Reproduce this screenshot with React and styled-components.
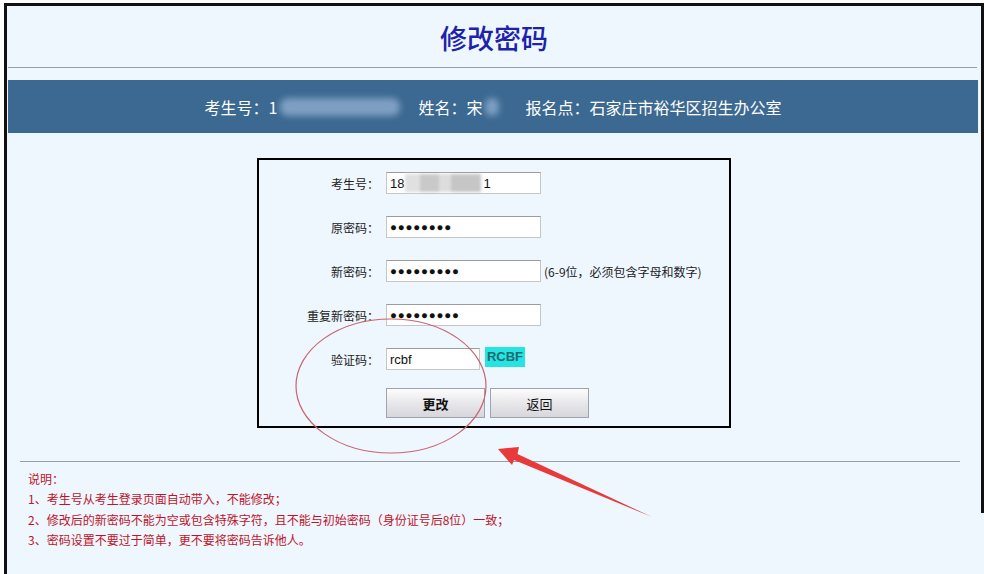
import styled, { createGlobalStyle } from "styled-components"

const GlobalStyle = createGlobalStyle`
    html, body {
        margin: 0;
        background: #ffffff;
        font-family: "Noto Sans CJK SC", "Liberation Sans", sans-serif;
    }
`

const rows = [
    { label: "原密码：", value: "●●●●●●●●" },
    { label: "新密码：", value: "●●●●●●●●●", hint: "(6-9位，必须包含字母和数字)" },
    { label: "重复新密码：", value: "●●●●●●●●●" },
]

const notes = [
    "1、考生号从考生登录页面自动带入，不能修改；",
    "2、修改后的新密码不能为空或包含特殊字符，且不能与初始密码（身份证号后8位）一致；",
    "3、密码设置不要过于简单，更不要将密码告诉他人。",
]

const App = () => {
    return <>
        <GlobalStyle />
        <Frame>
            <Title>修改密码</Title>
            <Rule />
            <InfoBar>
                <span>考生号：1</span>
                <Smudge $w={120} />
                <InfoItem $gap={18}>姓名：宋</InfoItem>
                <Smudge $w={14} />
                <InfoItem $gap={26}>报名点：石家庄市裕华区招生办公室</InfoItem>
            </InfoBar>

            <FormBox>
                <Row>
                    <Label>考生号：</Label>
                    <Field $w={155}>
                        18<GreySmudge />1
                    </Field>
                </Row>
                {rows.map((r) => (
                    <Row key={r.label}>
                        <Label>{r.label}</Label>
                        <Field $w={155} $dots>{r.value}</Field>
                        {r.hint && <Hint>{r.hint}</Hint>}
                    </Row>
                ))}
                <Row>
                    <Label>验证码：</Label>
                    <Field $w={94}>rcbf</Field>
                    <Captcha>RCBF</Captcha>
                </Row>
                <ButtonRow>
                    <Button $bold>更改</Button>
                    <Button>返回</Button>
                </ButtonRow>
            </FormBox>

            <NoteRule />
            <Notes>
                <p>说明：</p>
                {notes.map((n) => <p key={n}>{n}</p>)}
            </Notes>

            <Marks viewBox="0 0 974 568">
                <ellipse cx="384" cy="380" rx="95" ry="67" fill="none" stroke="#c9646e" strokeWidth="1.2" />
                <polygon
                    points="491,443 512,441 510.5,448 645,511 507,454 505,459"
                    fill="#e83a3a"
                />
            </Marks>
        </Frame>
    </>
}

const Frame = styled.div`
    position: relative;
    box-sizing: border-box;
    margin: 3px 0 0 4px;
    width: 980px;
    height: 571px;
    padding-right: 3px;
    border: 3px solid #111;
    border-bottom: none;
    border-right: none;
    background: #eef6fe;
    overflow: hidden;

    &::after {
        content: "";
        position: absolute;
        top: 0;
        right: 0;
        width: 3px;
        height: 507px;
        background: #111;
    }
`

const Title = styled.h1`
    margin: 0;
    padding-top: 12px;
    height: 40px;
    line-height: 40px;
    text-align: center;
    font-size: 27px;
    font-weight: 500;
    color: #1d22ad;
`

const Rule = styled.div`
    height: 1px;
    margin: 9px 4px 0 1px;
    background: #9a9ca6;
`

const InfoBar = styled.div`
    display: flex;
    align-items: center;
    justify-content: center;
    height: 53px;
    margin: 12px 3px 0 1px;
    background: #3c6991;
    color: #ffffff;
    font-size: 16px;
`

const InfoItem = styled.span`
    margin-left: ${(p) => p.$gap}px;
`

const Smudge = styled.span`
    display: inline-block;
    width: ${(p) => p.$w}px;
    height: 18px;
    margin-left: 3px;
    border-radius: 8px;
    background: #7d9fc2;
    filter: blur(3px);
`

const FormBox = styled.div`
    box-sizing: border-box;
    width: 474px;
    height: 270px;
    margin: 25px auto 0;
    padding-top: 12px;
    border: 2px solid #000;
    display: flex;
    flex-direction: column;
    gap: 22px;
`

const Row = styled.div`
    display: flex;
    align-items: center;
    height: 22px;
`

const Label = styled.label`
    width: 120px;
    margin-right: 7px;
    text-align: right;
    font-size: 12px;
    color: #222;
    white-space: nowrap;
`

const Field = styled.div`
    box-sizing: border-box;
    display: flex;
    align-items: center;
    width: ${(p) => p.$w}px;
    height: 22px;
    padding: 0 3px;
    background: #fff;
    border: 1px solid #c6c6c6;
    border-top-color: #9c9c9c;
    font-family: "Liberation Sans", Arial, sans-serif;
    font-size: ${(p) => (p.$dots ? "11.5px" : "13px")};
    letter-spacing: ${(p) => (p.$dots ? "0.8px" : "0")};
    color: #111;
`

const GreySmudge = styled.span`
    display: inline-block;
    width: 76px;
    height: 18px;
    margin: 0 2px 0 1px;
    background: linear-gradient(90deg, #e0e0e0 0 20%, #c9c9c9 20% 45%, #dddddd 45% 60%, #c6c6c6 60% 100%);
    filter: blur(1.5px);
`

const Hint = styled.span`
    margin-left: 3px;
    font-size: 12px;
    color: #222;
`

const Captcha = styled.span`
    align-self: flex-start;
    margin: -1px 0 0 5px;
    width: 40px;
    height: 20px;
    line-height: 19px;
    text-align: center;
    background: #27e4e4;
    color: #1f6b6e;
    font-family: "Liberation Sans", Arial, sans-serif;
    font-weight: bold;
    font-size: 13px;
`

const ButtonRow = styled.div`
    display: flex;
    gap: 5px;
    margin: -4px 0 0 127px;
`

const Button = styled.button`
    width: 99px;
    height: 30px;
    padding: 0;
    background: linear-gradient(#fdfdfd, #e6e6ea 55%, #d6d6dc);
    border: 1px solid #9ea3ad;
    font-family: "Noto Sans CJK SC", sans-serif;
    font-size: 13px;
    font-weight: ${(p) => (p.$bold ? "bold" : "normal")};
    color: #111;
`

const NoteRule = styled.div`
    width: 940px;
    height: 1px;
    margin: 33px 0 0 13px;
    background: #9a9ca6;
`

const Notes = styled.div`
    margin: 7px 0 0 21px;
    font-size: 12px;
    color: #bf1428;
    p {
        margin: 0;
        line-height: 20.4px;
    }
`

const Marks = styled.svg`
    position: absolute;
    top: 0;
    left: 0;
    width: 974px;
    height: 568px;
    pointer-events: none;
`

export default App
